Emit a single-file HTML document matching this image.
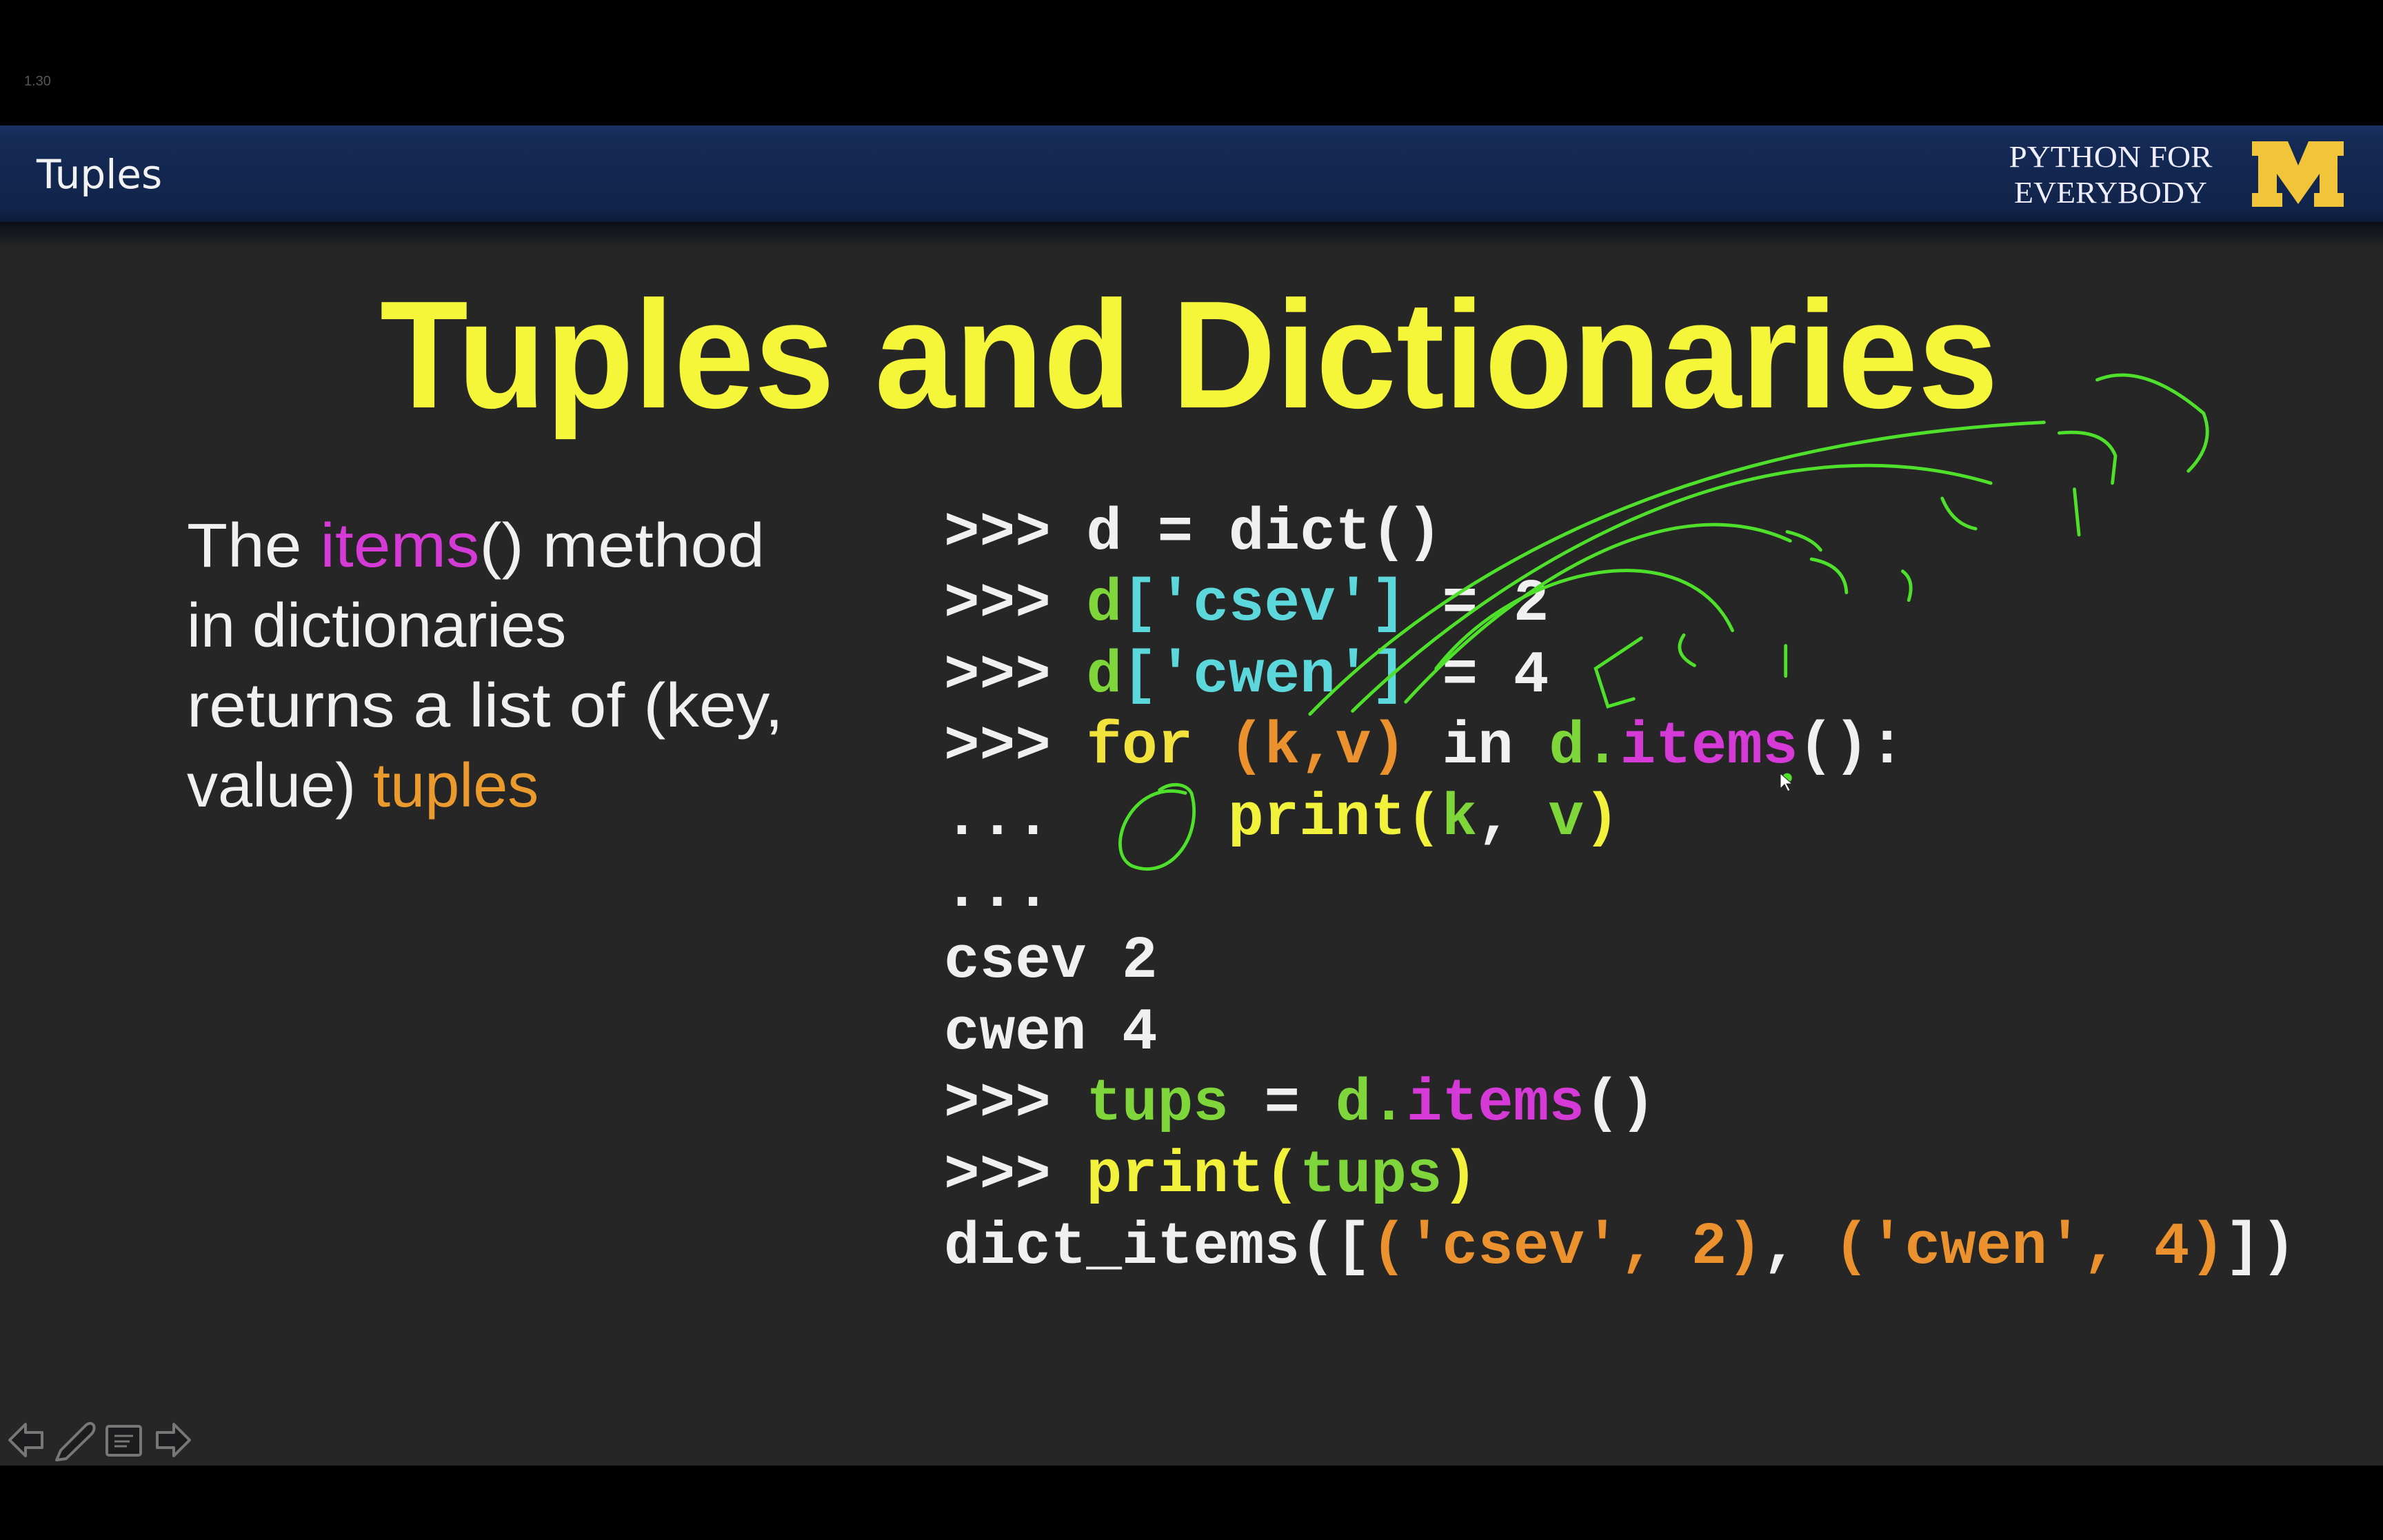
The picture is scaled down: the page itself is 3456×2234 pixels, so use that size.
<!DOCTYPE html>
<html><head><meta charset="utf-8"><style>
html,body{margin:0;padding:0;background:#000;width:3456px;height:2234px;overflow:hidden}
svg{display:block}
.pre text{white-space:pre}
</style></head><body>
<svg width="3456" height="2234" viewBox="0 0 3456 2234" xmlns="http://www.w3.org/2000/svg">
<defs>
<linearGradient id="hb" x1="0" y1="0" x2="0" y2="1">
<stop offset="0" stop-color="#1a3263"/><stop offset="0.15" stop-color="#142a55"/><stop offset="0.85" stop-color="#11244b"/><stop offset="1" stop-color="#0c1a36"/>
</linearGradient>
<linearGradient id="sh" x1="0" y1="0" x2="0" y2="1">
<stop offset="0" stop-color="#0a0f18"/><stop offset="1" stop-color="#262626"/>
</linearGradient>
</defs>
<rect x="0" y="0" width="3456" height="2234" fill="#000"/>
<rect x="0" y="182" width="3456" height="1944" fill="#262626"/>
<rect x="0" y="182" width="3456" height="140" fill="url(#hb)"/>
<rect x="0" y="322" width="3456" height="40" fill="url(#sh)"/>
<text x="35" y="124" font-family="Liberation Sans, sans-serif" font-size="20" fill="#555">1.30</text>
<text x="53" y="273" font-family="DejaVu Sans, sans-serif" font-size="58" fill="#f2f2f2">Tuples</text>
<text x="3061" y="242" text-anchor="middle" font-family="Liberation Serif, serif" font-size="44" fill="#eef" textLength="295" lengthAdjust="spacingAndGlyphs">PYTHON FOR</text>
<text x="3061" y="294" text-anchor="middle" font-family="Liberation Serif, serif" font-size="44" fill="#eef" textLength="280" lengthAdjust="spacingAndGlyphs">EVERYBODY</text>
<path d="M3266,205 H3318 L3333,240 L3348,205 H3399 V226 H3390 V280 H3399 V300 H3356 V280 H3364 V252 L3333,296 L3302,252 V280 H3310 V300 H3266 V280 H3275 V226 H3266 Z" fill="#f2c43a"/>
<text x="551" y="591" font-family="Liberation Sans, sans-serif" font-weight="bold" font-size="222" fill="#f5f53a" textLength="2347" lengthAdjust="spacingAndGlyphs">Tuples and Dictionaries</text>
<g font-family="Liberation Sans, sans-serif" font-size="90" fill="#f0f0f0">
<text x="271" y="822" textLength="838" lengthAdjust="spacingAndGlyphs">The <tspan fill="#d63ad6">items</tspan>() method</text>
<text x="271" y="938">in dictionaries</text>
<text x="271" y="1054" textLength="865" lengthAdjust="spacingAndGlyphs">returns a list of (key,</text>
<text x="271" y="1170">value) <tspan fill="#eb9a2e">tuples</tspan></text>
</g>
<g class="pre" font-family="Liberation Mono, monospace" font-weight="bold" font-size="86" fill="#f0f0f0">
<text x="1369" y="796">&gt;&gt;&gt; d = dict()</text>
<text x="1369" y="899">&gt;&gt;&gt; <tspan fill="#7ed63a">d</tspan><tspan fill="#5cd8dc">['csev']</tspan> = 2</text>
<text x="1369" y="1003">&gt;&gt;&gt; <tspan fill="#7ed63a">d</tspan><tspan fill="#5cd8dc">['cwen']</tspan> = 4</text>
<text x="1369" y="1106">&gt;&gt;&gt; <tspan fill="#f2e23c">for</tspan> <tspan fill="#eb922e">(k,v)</tspan> in <tspan fill="#7ed63a">d.</tspan><tspan fill="#d63ad6">items</tspan>():</text>
<text x="1369" y="1210">...</text>
<text x="1781" y="1210"><tspan fill="#f2f23c">print(</tspan><tspan fill="#7ed63a">k</tspan>, <tspan fill="#7ed63a">v</tspan><tspan fill="#f2f23c">)</tspan></text>
<text x="1369" y="1314">...</text>
<text x="1369" y="1417">csev 2</text>
<text x="1369" y="1521">cwen 4</text>
<text x="1369" y="1624">&gt;&gt;&gt; <tspan fill="#7ed63a">tups</tspan> = <tspan fill="#7ed63a">d.</tspan><tspan fill="#d63ad6">items</tspan>()</text>
<text x="1369" y="1728">&gt;&gt;&gt; <tspan fill="#f2f23c">print(</tspan><tspan fill="#7ed63a">tups</tspan><tspan fill="#f2f23c">)</tspan></text>
<text x="1369" y="1832">dict_items([<tspan fill="#eb922e">('csev', 2)</tspan>, <tspan fill="#eb922e">('cwen', 4)</tspan>])</text>
</g>
<g transform="scale(2.204)" fill="none" stroke="#4ee02a" stroke-width="2.2" stroke-linecap="round">
<path d="M862,470 C950,380 1100,290 1345,278"/>
<path d="M890,468 C980,380 1150,270 1310,318"/>
<path d="M925,462 C1000,380 1100,320 1178,356"/>
<path d="M945,440 C1000,370 1110,350 1140,415"/>
<path d="M1380,250 Q1410,238 1450,272 Q1458,292 1440,310"/>
<path d="M1355,285 Q1385,282 1392,300 L1390,318"/>
<path d="M1278,328 Q1285,345 1300,348"/>
<path d="M1365,322 L1368,352"/>
<path d="M1176,350 Q1192,354 1198,362"/>
<path d="M1192,368 Q1214,372 1215,390"/>
<path d="M1252,376 Q1260,382 1256,395"/>
<path d="M1080,420 L1050,440 L1058,465 L1075,460"/>
<path d="M1108,418 Q1100,430 1115,438"/>
<path d="M1175,425 L1175,445"/>
<path d="M780,522 C745,512 725,560 745,570 C770,580 792,550 784,522 C780,515 770,515 763,520"/>
<circle cx="1176" cy="512" r="2" fill="#4ee02a"/>
</g>
<path d="M2582,1122 l0,22 l6,-6 l5,10 l3,-2 l-5,-9 l8,0 z" fill="#fff" stroke="#222" stroke-width="1"/>
<g fill="#1c1c1e" stroke="#777" stroke-width="4" stroke-linejoin="round">
<path d="M14,2089 L37,2066 V2078 H61 V2100 H37 V2112 Z"/>
<path d="M275,2089 L252,2066 V2078 H228 V2100 H252 V2112 Z"/>
<path d="M88,2104 L125,2067 Q132,2062 136,2068 Q138,2074 133,2080 L96,2116 L82,2118 Z"/>
<rect x="155" y="2069" width="49" height="42" rx="3"/>
</g>
<g stroke="#777" stroke-width="3"><line x1="166" y1="2083" x2="193" y2="2083"/><line x1="166" y1="2091" x2="188" y2="2091"/><line x1="166" y1="2098" x2="184" y2="2098"/></g>
</svg>
</body></html>
